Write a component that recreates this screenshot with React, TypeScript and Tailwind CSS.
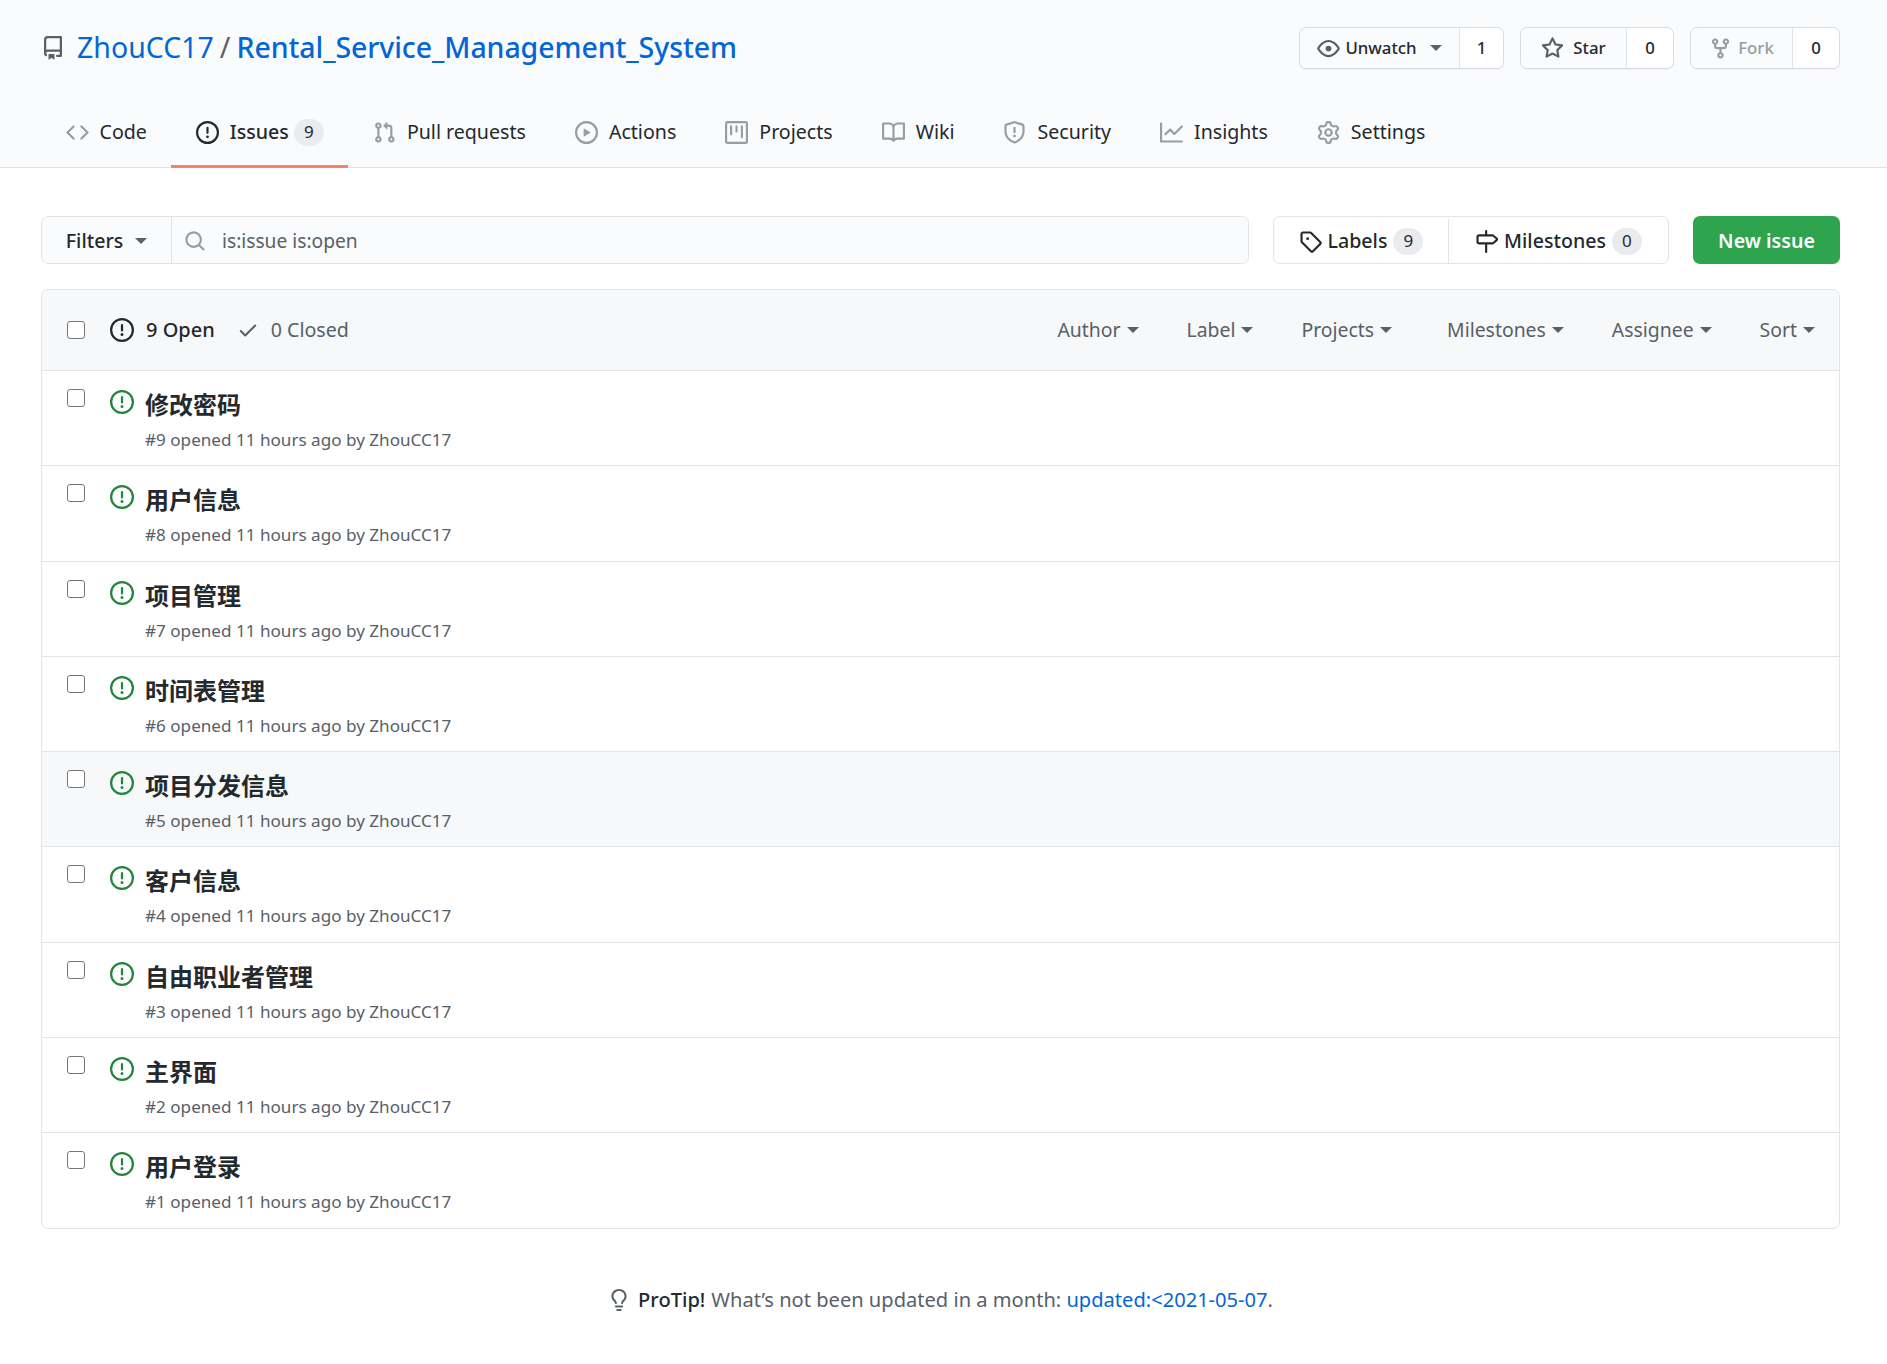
import type { ReactNode } from 'react';

const paths = {
  repo: 'M2 2.5A2.5 2.5 0 014.5 0h8.75a.75.75 0 01.75.75v12.5a.75.75 0 01-.75.75h-2.5a.75.75 0 110-1.5h1.75v-2h-8a1 1 0 00-.714 1.7.75.75 0 01-1.072 1.05A2.495 2.495 0 012 11.5v-9zm10.5-1V9h-8c-.356 0-.694.074-1 .208V2.5a1 1 0 011-1h8zM5 12.25v3.25a.25.25 0 00.4.2l1.45-1.087a.25.25 0 01.3 0L8.6 15.7a.25.25 0 00.4-.2v-3.25a.25.25 0 00-.25-.25h-3.5a.25.25 0 00-.25.25z',
  code: 'M4.72 3.22a.75.75 0 011.06 1.06L2.06 8l3.72 3.72a.75.75 0 11-1.06 1.06L.47 8.53a.75.75 0 010-1.06l4.25-4.25zm6.56 0a.75.75 0 10-1.06 1.06L13.94 8l-3.72 3.72a.75.75 0 101.06 1.06l4.25-4.25a.75.75 0 000-1.06l-4.25-4.25z',
  issue: 'M8 1.5a6.5 6.5 0 100 13 6.5 6.5 0 000-13zM0 8a8 8 0 1116 0A8 8 0 010 8zm9 3a1 1 0 11-2 0 1 1 0 012 0zm-.25-6.25a.75.75 0 00-1.5 0v3.5a.75.75 0 001.5 0v-3.5z',
  pull: 'M7.177 3.073L9.573.677A.25.25 0 0110 .854v4.792a.25.25 0 01-.427.177L7.177 3.427a.25.25 0 010-.354zM3.75 2.5a.75.75 0 100 1.5.75.75 0 000-1.5zm-2.25.75a2.25 2.25 0 113 2.122v5.256a2.251 2.251 0 11-1.5 0V5.372A2.25 2.25 0 011.5 3.25zM11 2.5h-1V4h1a1 1 0 011 1v5.628a2.251 2.251 0 101.5 0V5A2.5 2.5 0 0011 2.5zm1 10.25a.75.75 0 111.5 0 .75.75 0 01-1.5 0zM3.75 12a.75.75 0 100 1.5.75.75 0 000-1.5z',
  play: 'M1.5 8a6.5 6.5 0 1113 0 6.5 6.5 0 01-13 0zM8 0a8 8 0 100 16A8 8 0 008 0zM6.379 5.227A.25.25 0 006 5.442v5.117a.25.25 0 00.379.214l4.264-2.559a.25.25 0 000-.428L6.379 5.227z',
  project: 'M1.75 0A1.75 1.75 0 000 1.75v12.5C0 15.216.784 16 1.75 16h12.5A1.75 1.75 0 0016 14.25V1.75A1.75 1.75 0 0014.25 0H1.75zM1.5 1.75a.25.25 0 01.25-.25h12.5a.25.25 0 01.25.25v12.5a.25.25 0 01-.25.25H1.75a.25.25 0 01-.25-.25V1.75zM11.75 3a.75.75 0 00-.75.75v7.5a.75.75 0 001.5 0v-7.5a.75.75 0 00-.75-.75zm-8.25.75a.75.75 0 011.5 0v5.5a.75.75 0 01-1.5 0v-5.5zM8 3a.75.75 0 00-.75.75v3.5a.75.75 0 001.5 0v-3.5A.75.75 0 008 3z',
  book: 'M0 1.75A.75.75 0 01.75 1h4.253c1.227 0 2.317.59 3 1.501A3.744 3.744 0 0111.006 1h4.245a.75.75 0 01.75.75v10.5a.75.75 0 01-.75.75h-4.507a2.25 2.25 0 00-1.591.659l-.622.621a.75.75 0 01-1.06 0l-.622-.621A2.25 2.25 0 005.258 13H.75a.75.75 0 01-.75-.75V1.75zm8.755 3a2.25 2.25 0 012.25-2.25H14.5v9h-3.757c-.71 0-1.4.201-1.992.572l.004-7.322zm-1.504 7.324l.004-5.073-.002-2.253A2.25 2.25 0 005.003 2.5H1.5v9h3.757a3.75 3.75 0 011.994.574z',
  shield: 'M7.467.133a1.75 1.75 0 011.066 0l5.25 1.68A1.75 1.75 0 0115 3.48V7c0 1.566-.32 3.182-1.303 4.682-.983 1.498-2.585 2.813-5.032 3.855a1.7 1.7 0 01-1.33 0c-2.447-1.042-4.049-2.357-5.032-3.855C1.32 10.182 1 8.566 1 7V3.48a1.75 1.75 0 011.217-1.667l5.25-1.68zm.61 1.429a.25.25 0 00-.153 0l-5.25 1.68a.25.25 0 00-.174.238V7c0 1.358.275 2.666 1.057 3.86.784 1.194 2.121 2.34 4.366 3.297a.2.2 0 00.154 0c2.245-.956 3.582-2.104 4.366-3.298C13.225 9.666 13.5 8.36 13.5 7V3.48a.25.25 0 00-.174-.237l-5.25-1.68zM9 10.5a1 1 0 11-2 0 1 1 0 012 0zm-.25-5.75a.75.75 0 10-1.5 0v3a.75.75 0 001.5 0v-3z',
  graph: 'M1.5 1.75a.75.75 0 00-1.5 0v12.5c0 .414.336.75.75.75h14.5a.75.75 0 000-1.5H1.5V1.75zm14.28 2.53a.75.75 0 00-1.06-1.06L10 7.94 7.53 5.47a.75.75 0 00-1.06 0L3.22 8.72a.75.75 0 001.06 1.06L7 7.06l2.47 2.47a.75.75 0 001.06 0l5.25-5.25z',
  gear: 'M7.429 1.525a6.593 6.593 0 011.142 0c.036.003.108.036.137.146l.289 1.105c.147.56.55.967.997 1.189.174.086.341.183.501.29.417.278.97.423 1.53.27l1.102-.303c.11-.03.175.016.195.046.219.31.41.641.573.989.014.031.022.11-.059.19l-.815.806c-.411.406-.562.957-.53 1.456a4.588 4.588 0 010 .582c-.032.499.119 1.05.53 1.456l.815.806c.08.08.073.159.059.19a6.494 6.494 0 01-.573.99c-.02.029-.086.074-.195.045l-1.103-.303c-.559-.153-1.112-.008-1.529.27-.16.107-.327.204-.5.29-.449.222-.851.628-.998 1.189l-.289 1.105c-.029.11-.101.143-.137.146a6.613 6.613 0 01-1.142 0c-.036-.003-.108-.037-.137-.146l-.289-1.105c-.147-.56-.55-.967-.997-1.189a4.502 4.502 0 01-.501-.29c-.417-.278-.97-.423-1.53-.27l-1.102.303c-.11.03-.175-.016-.195-.046a6.492 6.492 0 01-.573-.989c-.014-.031-.022-.11.059-.19l.815-.806c.411-.406.562-.957.53-1.456a4.587 4.587 0 010-.582c.032-.499-.119-1.05-.53-1.456l-.815-.806c-.08-.08-.073-.159-.059-.19a6.44 6.44 0 01.573-.99c.02-.029.086-.075.195-.045l1.103.303c.559.153 1.112.008 1.529-.27.16-.107.327-.204.5-.29.449-.222.851-.628.998-1.189l.289-1.105c.029-.11.101-.143.137-.146zM8 0c-.236 0-.47.01-.701.03-.743.065-1.29.615-1.458 1.261l-.29 1.106c-.017.066-.078.158-.211.224a5.994 5.994 0 00-.668.386c-.123.082-.233.09-.3.071L3.27 2.776c-.644-.177-1.392.02-1.82.63a7.977 7.977 0 00-.704 1.217c-.315.675-.111 1.422.363 1.891l.815.806c.05.048.098.147.088.294a6.084 6.084 0 000 .772c.01.147-.038.246-.088.294l-.815.806c-.474.469-.678 1.216-.363 1.891.2.428.436.835.704 1.218.428.609 1.176.806 1.82.63l1.103-.303c.066-.019.176-.011.299.071.213.143.436.272.668.386.133.066.194.158.212.224l.289 1.106c.169.646.715 1.196 1.458 1.26a8.094 8.094 0 001.402 0c.743-.064 1.29-.614 1.458-1.26l.29-1.106c.017-.066.078-.158.211-.224a5.98 5.98 0 00.668-.386c.123-.082.233-.09.3-.071l1.102.302c.644.177 1.392-.02 1.82-.63.268-.382.505-.789.704-1.217.315-.675.111-1.422-.364-1.891l-.814-.806c-.05-.048-.098-.147-.088-.294a6.1 6.1 0 000-.772c-.01-.147.039-.246.088-.294l.814-.806c.475-.469.679-1.216.364-1.891a7.992 7.992 0 00-.704-1.218c-.428-.609-1.176-.806-1.82-.63l-1.103.303c-.066.019-.176.011-.299-.071a5.991 5.991 0 00-.668-.386c-.133-.066-.194-.158-.212-.224L10.16 1.29C9.99.645 9.444.095 8.701.031A8.094 8.094 0 008 0zm1.5 8a1.5 1.5 0 11-3 0 1.5 1.5 0 013 0zM11 8a3 3 0 11-6 0 3 3 0 016 0z',
  eye: 'M1.679 7.932c.412-.621 1.242-1.75 2.366-2.717C5.175 4.242 6.527 3.5 8 3.5c1.473 0 2.824.742 3.955 1.715 1.124.967 1.954 2.096 2.366 2.717a.119.119 0 010 .136c-.412.621-1.242 1.75-2.366 2.717C10.825 11.758 9.473 12.5 8 12.5c-1.473 0-2.824-.742-3.955-1.715C2.92 9.818 2.09 8.69 1.679 8.068a.119.119 0 010-.136zM8 2c-1.981 0-3.67.992-4.933 2.078C1.797 5.169.88 6.423.43 7.1a1.619 1.619 0 000 1.798c.45.678 1.367 1.932 2.637 3.024C4.329 13.008 6.019 14 8 14c1.981 0 3.67-.992 4.933-2.078 1.27-1.091 2.187-2.345 2.637-3.023a1.619 1.619 0 000-1.798c-.45-.678-1.367-1.932-2.637-3.023C11.671 2.992 9.981 2 8 2zm0 8a2 2 0 100-4 2 2 0 000 4z',
  star: 'M8 .25a.75.75 0 01.673.418l1.882 3.815 4.21.612a.75.75 0 01.416 1.279l-3.046 2.97.719 4.192a.75.75 0 01-1.088.791L8 12.347l-3.766 1.98a.75.75 0 01-1.088-.79l.72-4.194L.818 6.374a.75.75 0 01.416-1.28l4.21-.611L7.327.668A.75.75 0 018 .25zm0 2.445L6.615 5.5a.75.75 0 01-.564.41l-3.097.45 2.24 2.184a.75.75 0 01.216.664l-.528 3.084 2.769-1.456a.75.75 0 01.698 0l2.77 1.456-.53-3.084a.75.75 0 01.216-.664l2.24-2.183-3.096-.45a.75.75 0 01-.564-.41L8 2.694z',
  fork: 'M5 3.25a.75.75 0 11-1.5 0 .75.75 0 011.5 0zm0 2.122a2.25 2.25 0 10-1.5 0v.878A2.25 2.25 0 005.75 8.5h1.5v2.128a2.251 2.251 0 101.5 0V8.5h1.5a2.25 2.25 0 002.25-2.25v-.878a2.25 2.25 0 10-1.5 0v.878a.75.75 0 01-.75.75h-4.5A.75.75 0 015 6.25v-.878zm3.75 7.378a.75.75 0 11-1.5 0 .75.75 0 011.5 0zm3-8.75a.75.75 0 100-1.5.75.75 0 000 1.5z',
  search: 'M11.5 7a4.499 4.499 0 11-8.998 0A4.499 4.499 0 0111.5 7zm-.82 4.74a6 6 0 111.06-1.06l3.04 3.04a.75.75 0 11-1.06 1.06l-3.04-3.04z',
  tag: 'M2.5 7.775V2.75a.25.25 0 01.25-.25h5.025a.25.25 0 01.177.073l6.25 6.25a.25.25 0 010 .354l-5.025 5.025a.25.25 0 01-.354 0l-6.25-6.25a.25.25 0 01-.073-.177zm-1.5 0V2.75C1 1.784 1.784 1 2.75 1h5.025c.464 0 .91.184 1.238.513l6.25 6.25a1.75 1.75 0 010 2.474l-5.026 5.026a1.75 1.75 0 01-2.474 0l-6.25-6.25A1.75 1.75 0 011 7.775zM6 5a1 1 0 100 2 1 1 0 000-2z',
  milestone: 'M7.75 0a.75.75 0 01.75.75V3h3.634c.414 0 .814.147 1.13.414l2.07 1.75a1.75 1.75 0 010 2.672l-2.07 1.75a1.75 1.75 0 01-1.13.414H8.5v5.25a.75.75 0 11-1.5 0V10H2.75A1.75 1.75 0 011 8.25v-3.5C1 3.784 1.784 3 2.75 3H7V.75A.75.75 0 017.75 0zm0 8.5h4.384a.25.25 0 00.161-.06l2.07-1.75a.25.25 0 000-.38l-2.07-1.75a.25.25 0 00-.161-.06H2.75a.25.25 0 00-.25.25v3.5c0 .138.112.25.25.25h5z',
  check: 'M13.78 4.22a.75.75 0 010 1.06l-7.25 7.25a.75.75 0 01-1.06 0L2.22 9.28a.75.75 0 011.06-1.06L6 10.94l6.72-6.72a.75.75 0 011.06 0z',
  bulb: 'M8 1.5c-2.363 0-4 1.69-4 3.75 0 .984.424 1.625.984 2.304l.214.253c.223.264.47.556.673.848.284.411.537.896.621 1.49a.75.75 0 01-1.484.211c-.04-.282-.163-.547-.37-.847a8.695 8.695 0 00-.542-.68c-.084-.1-.173-.205-.268-.32C3.201 7.75 2.5 6.766 2.5 5.25 2.5 2.31 4.863 0 8 0s5.5 2.31 5.5 5.25c0 1.516-.701 2.5-1.328 3.259-.095.115-.184.22-.268.319-.207.245-.383.453-.541.681-.208.3-.33.565-.37.847a.75.75 0 01-1.485-.212c.084-.593.337-1.078.621-1.489.203-.292.45-.584.673-.848.075-.088.147-.173.213-.253.561-.679.985-1.32.985-2.304 0-2.06-1.637-3.75-4-3.75zM6 15.25a.75.75 0 01.75-.75h2.5a.75.75 0 010 1.5h-2.5a.75.75 0 01-.75-.75zM5.75 12a.75.75 0 000 1.5h4.5a.75.75 0 000-1.5h-4.5z',
};

type IconName = keyof typeof paths;

const Icon = ({ name, className }: { name: IconName; className: string }) => (
  <svg viewBox="0 0 16 16" fill="currentColor" fillRule="evenodd" className={`shrink-0 ${className}`}>
    <path d={paths[name]} />
  </svg>
);

const Caret = ({ className = '' }: { className?: string }) => (
  <span className={`inline-block h-0 w-0 border-x-[6px] border-t-[6px] border-x-transparent border-t-current ${className}`} />
);

const Badge = ({ children }: { children: ReactNode }) => (
  <span className="flex h-[27px] min-w-[30px] items-center justify-center rounded-full bg-[#e9ebee] text-[17px] font-normal text-[#24292e]">
    {children}
  </span>
);

const tabs: { label: string; icon: IconName; count?: number; active?: boolean }[] = [
  { label: 'Code', icon: 'code' },
  { label: 'Issues', icon: 'issue', count: 9, active: true },
  { label: 'Pull requests', icon: 'pull' },
  { label: 'Actions', icon: 'play' },
  { label: 'Projects', icon: 'project' },
  { label: 'Wiki', icon: 'book' },
  { label: 'Security', icon: 'shield' },
  { label: 'Insights', icon: 'graph' },
  { label: 'Settings', icon: 'gear' },
];

const issues = [
  { n: 9, title: '修改密码' },
  { n: 8, title: '用户信息' },
  { n: 7, title: '项目管理' },
  { n: 6, title: '时间表管理' },
  { n: 5, title: '项目分发信息', hover: true },
  { n: 4, title: '客户信息' },
  { n: 3, title: '自由职业者管理' },
  { n: 2, title: '主界面' },
  { n: 1, title: '用户登录' },
];

const filters = [
  { label: 'Author', gap: 'ml-0' },
  { label: 'Label', gap: 'ml-12' },
  { label: 'Projects', gap: 'ml-12' },
  { label: 'Milestones', gap: 'ml-[55px]' },
  { label: 'Assignee', gap: 'ml-12' },
  { label: 'Sort', gap: 'ml-12' },
];

const Checkbox = () => <span className="block h-[18px] w-[18px] rounded-[3px] border border-[#767676] bg-white" />;

const RepoButton = ({
  icon,
  label,
  count,
  width,
  countWidth,
  iconGap,
  caret,
  muted,
}: {
  icon: IconName;
  label: string;
  count: number;
  width: string;
  countWidth: string;
  iconGap: string;
  caret?: boolean;
  muted?: boolean;
}) => (
  <div className="flex h-[42px] rounded-[7px] border border-[#d9dbde] text-[16.8px] font-medium shadow-[0_1px_0_rgba(27,31,35,0.04)]">
    <div className={`flex items-center justify-center rounded-l-[7px] bg-[#fafbfc] ${iconGap} ${width} ${muted ? 'text-[#959da5]' : 'text-[#24292e]'}`}>
      <Icon name={icon} className={`h-[23px] w-[23px] ${muted ? 'text-[#959da5]' : 'text-[#586069]'}`} />
      <span>{label}</span>
      {caret && <Caret className="ml-2 text-[#586069]" />}
    </div>
    <div className={`flex items-center justify-center rounded-r-[7px] border-l border-[#e1e4e8] bg-white text-[#24292e] ${countWidth}`}>{count}</div>
  </div>
);

export default function App() {
  return (
    <div className="min-h-[1364px] bg-white text-[#24292e] [font-family:'Noto_Sans','Noto_Sans_CJK_SC',sans-serif]">
      <header className="h-[168px] border-b border-[#e1e4e8] bg-[#fafbfc] pr-[47px] pl-[41px]">
        <div className="flex h-[96px] items-center justify-between">
          <div className="-mt-px flex items-center text-[28.5px]">
            <Icon name="repo" className="mr-3 h-[24px] w-[24px] text-[#586069]" />
            <a className="text-[#0366d6]">ZhouCC17</a>
            <span className="mx-[6px] text-[#586069]">/</span>
            <a className="font-medium tracking-[-0.08px] text-[#0366d6]">Rental_Service_Management_System</a>
          </div>
          <div className="flex gap-4">
            <RepoButton icon="eye" label="Unwatch" count={1} width="w-[159px]" countWidth="w-[44px]" iconGap="gap-[5px]" caret />
            <RepoButton icon="star" label="Star" count={0} width="w-[105px]" countWidth="w-[47px]" iconGap="gap-[9px]" />
            <RepoButton icon="fork" label="Fork" count={0} width="w-[101px]" countWidth="w-[47px]" iconGap="gap-[6px]" muted />
          </div>
        </div>
        <nav className="flex h-[72px] items-stretch">
          {tabs.map((t) => (
            <a
              key={t.label}
              className={`flex items-center gap-[11px] border-b-[3px] px-[24.5px] pt-[3px] text-[19.6px] ${t.active ? 'border-[#f9826c] font-medium' : 'border-transparent'}`}
            >
              <Icon name={t.icon} className={`h-[23px] w-[23px] ${t.active ? 'text-[#24292e]' : 'text-[#959da5]'}`} />
              <span>{t.label}</span>
              {t.count !== undefined && (
                <span className="-ml-[6px]">
                  <Badge>{t.count}</Badge>
                </span>
              )}
            </a>
          ))}
        </nav>
      </header>

      <main className="pt-[48px] pr-[47px] pl-[41px]">
        <div className="flex h-[48px] items-stretch">
          <div className="flex flex-1 rounded-[7px] border border-[#e1e4e8]">
            <button className="flex w-[130px] items-center justify-center gap-3 rounded-l-[7px] border-r border-[#e1e4e8] bg-[#fafbfc] pt-[2px] text-[19.6px] font-medium">
              Filters <Caret className="text-[#586069]" />
            </button>
            <div className="flex flex-1 items-center gap-4 rounded-r-[7px] bg-[#fafbfc] px-3 pt-[2px] text-[19.2px] text-[#586069]">
              <Icon name="search" className="h-[22px] w-[22px] text-[#959da5]" />
              is:issue is:open
            </div>
          </div>
          <div className="ml-6 flex rounded-[7px] border border-[#e1e4e8] pt-[2px] text-[19.6px] font-medium">
            <a className="flex w-[175px] items-center justify-center gap-1.5 border-r border-[#e1e4e8]">
              <Icon name="tag" className="h-[23px] w-[23px]" />
              Labels <Badge>9</Badge>
            </a>
            <a className="flex w-[219px] items-center justify-center gap-1.5">
              <Icon name="milestone" className="h-[23px] w-[23px]" />
              Milestones <Badge>0</Badge>
            </a>
          </div>
          <button className="ml-6 w-[147px] rounded-[7px] bg-[#2ea44f] pt-[2px] text-[19.6px] font-semibold text-white">New issue</button>
        </div>

        <section className="mt-[25px] overflow-hidden rounded-[7px] border border-[#e1e4e8]">
          <div className="flex h-[80px] items-center bg-[#f6f8fa] pr-6 pl-[25px]">
            <Checkbox />
            <Icon name="issue" className="ml-[25px] h-[24px] w-[24px]" />
            <span className="ml-3 text-[20px] font-medium">9 Open</span>
            <Icon name="check" className="ml-[22px] h-[22px] w-[22px] text-[#586069]" />
            <span className="ml-3 text-[19.6px] text-[#586069]">0 Closed</span>
            <div className="ml-auto flex text-[19.4px] text-[#586069]">
              {filters.map((f) => (
                <span key={f.label} className={`flex items-center gap-[6px] ${f.gap}`}>
                  {f.label} <Caret />
                </span>
              ))}
            </div>
          </div>
          {issues.map((issue) => (
            <div
              key={issue.n}
              className={`flex h-[95.3px] border-t border-[#e1e4e8] pl-[25px] ${issue.hover ? 'bg-[#f6f8fa]' : ''}`}
            >
              <div className="pt-[18px]">
                <Checkbox />
              </div>
              <div className="ml-[25px] pt-[19px] text-[#22863a]">
                <Icon name="issue" className="h-[24px] w-[24px]" />
              </div>
              <div className="ml-[11px] pt-[18px]">
                <div className="text-[24px] leading-[32px] font-bold text-[#24292e]">{issue.title}</div>
                <div className="mt-[7px] text-[17.1px] leading-[24px] text-[#586069]">
                  #{issue.n} opened 11 hours ago by ZhouCC17
                </div>
              </div>
            </div>
          ))}
        </section>

        <p className="mt-[56px] flex items-center justify-center text-[20.1px] text-[#586069]">
          <Icon name="bulb" className="mr-2 h-[22px] w-[22px]" />
          <strong className="mr-[6px] font-medium text-[#24292e]">ProTip!</strong>
          What’s not been updated in a month:&nbsp;<a className="text-[#0366d6]">updated:&lt;2021-05-07</a>.
        </p>
      </main>
    </div>
  );
}
